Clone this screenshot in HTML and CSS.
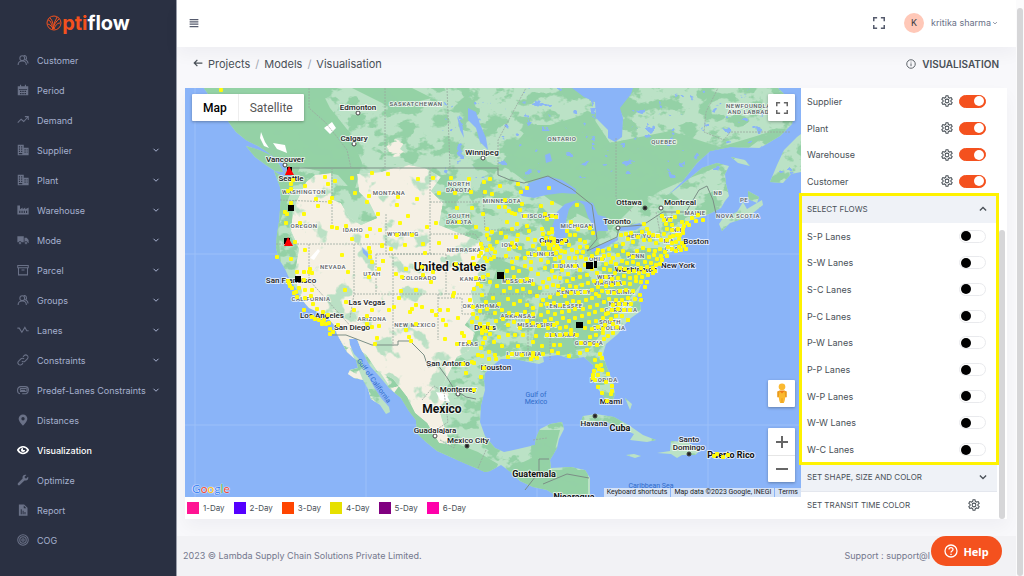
FILE: index.html
```html
<!DOCTYPE html>
<html lang="en">

<head>
    <meta charset="UTF-8">
    <meta name="viewport" content="width=device-width, initial-scale=1.0">
    <title>Optiflow - Visualisation</title>
    <link rel="stylesheet" href="styles.css">
</head>

<body>
    <!-- icon set -->
    <svg class="sprite" aria-hidden="true">
        <symbol id="i-users" viewBox="0 0 16 16"><g class="line"><circle cx="7" cy="5.500" r="3.200"/><path d="M1.500 14.500c0-3 2-5.300 5.500-5.300s5.500 2.300 5.500 5.300M9 2.400c2.600-1.600 5.500 2.800 2.200 5.400 2 .8 3.500 2.700 3.500 5"/></g></symbol>
        <symbol id="i-calendar" viewBox="0 0 16 16"><path fill-rule="evenodd" d="M1 3h3V1h1.500v2h5V1H12v2h3v12H1zM2.500 6.500v1h11v-1zM4 9v1.500h2V9zm3 0v1.500h2V9zm3 0v1.500h2V9zm-6 3v1.500h2V12zm3 0v1.500h2V12zm3 0v1.500h2V12z"/></symbol>
        <symbol id="i-trend" viewBox="0 0 16 16"><path class="line" d="M1 11.500 5.500 7l3.500 3 5.500-6M10.500 3.500H15V8"/></symbol>
        <symbol id="i-building" viewBox="0 0 16 16"><path fill-rule="evenodd" d="M1 1h8v4h6.500v10H1zM2.500 3v1.500H4V3zm3 0v1.500H7V3zm-3 3v1.500H4V6zm3 0v1.500H7V6zm-3 3v1.500H4V9zm3 0v1.500H7V9zm-3 3v1.500H7V12zM10 7v1.500h1.500V7zm3 0v1.500h1V7zm-3 3v1.500h1.500V10zm3 0v1.500h1V10z"/></symbol>
        <symbol id="i-factory" viewBox="0 0 16 16"><path fill-rule="evenodd" d="M.5 2H4v5l3.500-2.500V7L11 4.500V7l4.500-2.500V14H.5zM3 9v3h1.500V9zm3 0v3h1.500V9zm3 0v3h1.500V9zm3 0v3h1.500V9z"/></symbol>
        <symbol id="i-truck" viewBox="0 0 16 16"><path d="M.5 3H9v8H.5zM10 5h3l2.500 3v4H10z"/><g class="wheel"><circle cx="4" cy="12" r="2"/><circle cx="12" cy="12" r="2"/></g></symbol>
        <symbol id="i-box" viewBox="0 0 16 16"><path class="line" d="M1 2h14v3H1zM2 5h12v9.500H2zM6 8h4"/></symbol>
        <symbol id="i-pulse" viewBox="0 0 16 16"><path class="line" d="M.500 5.500H3L6.500 11l4-6.500L13 9h2.500"/></symbol>
        <symbol id="i-link" viewBox="0 0 16 16"><path class="line" d="M6.500 9.500a3 3 0 0 0 4.300 0l3-3A3 3 0 0 0 9.500 2.200L8 3.700M9.500 6.500a3 3 0 0 0-4.300 0l-3 3a3 3 0 0 0 4.300 4.300L8 12.300"/></symbol>
        <symbol id="i-clip" viewBox="0 0 16 16"><path class="line" d="M4 10h7.500a2 2 0 0 0 0-4H5a1.500 1.500 0 0 0 0 2.500h6M4 13c-4.500-1-4.500-9 1-9.500h6c5.500 0 5.500 7.500 1 9.500H7"/></symbol>
        <symbol id="i-pin" viewBox="0 0 16 16"><path fill-rule="evenodd" d="M8 .500a5.800 5.800 0 0 1 5.800 5.800C13.800 10 8 15.500 8 15.500S2.200 10 2.200 6.300A5.800 5.800 0 0 1 8 .500zM8 4a2.200 2.200 0 1 0 0 4.500A2.200 2.200 0 0 0 8 4z"/></symbol>
        <symbol id="i-eye" viewBox="0 0 16 16"><path class="line thick" d="M1 8c3.500-6 10.500-6 14 0-3.500 6-10.500 6-14 0z"/><path d="M8 5.200A2.800 2.800 0 1 0 10.800 8H8z"/></symbol>
        <symbol id="i-wrench" viewBox="0 0 16 16"><path d="M14.800 3.500 12 6.300 9.800 4.100l2.700-2.800C9.500.2 6.500 2.800 7.500 6L1.200 12.300a1.800 1.800 0 0 0 2.500 2.500L10 8.500c3.300 1 6-2 4.800-5z"/></symbol>
        <symbol id="i-report" viewBox="0 0 16 16"><path fill-rule="evenodd" d="M2.500.5h7l4.500 4.500v10.500H2.500zM9 2v3.500h3.500zM5 7v6.500h1.300V7zm2.500 2v4.500h1.300V9zm2.500 1.500v3h1.300v-3z"/></symbol>
        <symbol id="i-target" viewBox="0 0 16 16"><g class="line"><circle cx="8" cy="8" r="7"/><circle cx="8" cy="8" r="4.300"/><circle cx="8" cy="8" r="1.600"/></g></symbol>
        <symbol id="i-down" viewBox="0 0 16 16"><path class="line thick" d="M3 5.500 8 10.500l5-5"/></symbol>
        <symbol id="i-up" viewBox="0 0 16 16"><path class="line thick" d="M3 10.500 8 5.500l5 5"/></symbol>
        <symbol id="i-menu" viewBox="0 0 16 16"><path class="line thick" d="M1 2.500h14M1 6.200h14M1 9.900h14M1 13.600h14"/></symbol>
        <symbol id="i-expand" viewBox="0 0 16 16"><path class="line thick" d="M1 5.500V1h4.500M10.500 1H15v4.500M15 10.500V15h-4.500M5.500 15H1v-4.500"/></symbol>
        <symbol id="i-back" viewBox="0 0 16 16"><path class="line thick" d="M15 8H2M7 3 2 8l5 5"/></symbol>
        <symbol id="i-info" viewBox="0 0 16 16"><g class="line"><circle cx="8" cy="8" r="6.800"/><path d="M8 7v4.500M8 4.300v1.200"/></g></symbol>
        <symbol id="i-gear" viewBox="0 0 16 16"><g class="line"><circle cx="8" cy="8" r="2.500"/><path d="M6.700 1h2.600l.5 2.200 1.600.9 2.200-.7 1.300 2.300L13.200 7.200v1.600l1.700 1.500-1.300 2.300-2.200-.7-1.600.9-.5 2.200H6.700l-.5-2.200-1.600-.9-2.200.7-1.300-2.300 1.700-1.500V7.200L1.100 5.700l1.300-2.300 2.200.7 1.600-.9z"/></g></symbol>
    </svg>

    <aside class="sidebar">
        <a href="#" class="logo">
            <svg class="logo-mark" viewBox="0 0 16 16"><circle cx="8" cy="8" r="7"/><path d="M2 5c3 0 4 6 5 9M4 3c3 2 3 8 4 11M13 4c-3 2-5 6-6 10M14 8c-3 0-5 3-6 6M2 9c3 1 4 3 5 5M11 2c-1 3-3 5-3 8"/></svg><span class="logo-hot">pti</span>flow
        </a>
        <nav class="menu">
            <a href="#"><svg><use href="#i-users"/></svg>Customer</a>
            <a href="#"><svg><use href="#i-calendar"/></svg>Period</a>
            <a href="#"><svg><use href="#i-trend"/></svg>Demand</a>
            <a href="#"><svg><use href="#i-building"/></svg>Supplier<svg class="caret"><use href="#i-down"/></svg></a>
            <a href="#"><svg><use href="#i-building"/></svg>Plant<svg class="caret"><use href="#i-down"/></svg></a>
            <a href="#"><svg><use href="#i-factory"/></svg>Warehouse<svg class="caret"><use href="#i-down"/></svg></a>
            <a href="#"><svg><use href="#i-truck"/></svg>Mode<svg class="caret"><use href="#i-down"/></svg></a>
            <a href="#"><svg><use href="#i-box"/></svg>Parcel<svg class="caret"><use href="#i-down"/></svg></a>
            <a href="#"><svg><use href="#i-users"/></svg>Groups<svg class="caret"><use href="#i-down"/></svg></a>
            <a href="#"><svg><use href="#i-pulse"/></svg>Lanes<svg class="caret"><use href="#i-down"/></svg></a>
            <a href="#"><svg><use href="#i-link"/></svg>Constraints<svg class="caret"><use href="#i-down"/></svg></a>
            <a href="#"><svg><use href="#i-clip"/></svg>Predef-Lanes Constraints<svg class="caret"><use href="#i-down"/></svg></a>
            <a href="#"><svg><use href="#i-pin"/></svg>Distances</a>
            <a href="#" class="active"><svg><use href="#i-eye"/></svg>Visualization</a>
            <a href="#"><svg><use href="#i-wrench"/></svg>Optimize</a>
            <a href="#"><svg><use href="#i-report"/></svg>Report</a>
            <a href="#"><svg><use href="#i-target"/></svg>COG</a>
        </nav>
    </aside>

    <div class="page">
        <header class="topbar">
            <button type="button" class="icon-btn" aria-label="Toggle menu"><svg class="ico-10"><use href="#i-menu"/></svg></button>
            <div class="topbar-right">
                <button type="button" class="icon-btn" aria-label="Fullscreen"><svg class="ico-12"><use href="#i-expand"/></svg></button>
                <button type="button" class="user"><span class="avatar">K</span>kritika sharma<svg class="user-caret"><use href="#i-down"/></svg></button>
            </div>
        </header>

        <main class="content">
            <div class="title-row">
                <nav class="crumbs">
                    <a href="#" aria-label="Back"><svg class="ico-10"><use href="#i-back"/></svg></a>
                    <a href="#">Projects</a><span class="sep">/</span><a href="#">Models</a><span class="sep">/</span><span>Visualisation</span>
                </nav>
                <h1><svg class="ico-10"><use href="#i-info"/></svg>VISUALISATION</h1>
            </div>

            <div class="card">
                <div class="map-side">
                    <div class="map">
                        <svg class="map-art" viewBox="185 88 616 409" preserveAspectRatio="xMidYMid slice" role="img" aria-label="Map of North America">
                            <defs>
                                <path id="land" d="M204 88l4 6 5 7 7 7 4 7 6 9 6 8 10 8 12 6 8 5 8 6 8 5 4 6-1 9-5-2-6-4 3 8 3 8 1 13-1 10-1 12-2 12-1 14 3 11 6 10 4 9 7 11 6 11 7 8 11 5 8 5 6 7 3 9 5 9 5 9 9 8 2 8-8 2-2 4 6 4 9 2 5 9 3 10 9 6 6 9 4-2-1-5-8-9-6-9-8-15-6-13-7-7-4-9-1-6 8 0 4 10 9 17 9 10 11 13 11 9 8 13 7 9 1 13 9 9 11 9 18 8 16 7 14 6 5-1 11-6 11 8 8 8 13 6 14 3 8 5h35l0-17-5-8-14-3-20 1-1-8 7-12 2-9 5-10-2-7-12 2-10 5-4 9-1 7-17 4-14 3-9-4-10-12-5-14 1-17 4-15-1-9 1-8 6-6 10-8 14 0 13 3 11 2 5-2-1-5 15-2 13 4 13-2 9 8 0 12 5 12 6 8 9 3 2-6-2-12-7-17-3-11 3-10 12-10 8-11 5-5 10-7-1-8-3-6 4-12 6-10 5-5 14-16 18-6-2-9-4-6 5-7 8-6 13-4 7-3 10-5 4-7 4-5-3-12-1-10 4-8-12-3-15 5-12 10-23 18 15-14 15-19 13-12 20-4 30 1 20-12 12-12 3-14-9-14-11-11z"/>
                                <path id="islands" d="M246 146l13 4 11 5 9 9 4 8-8-1-9-6-11-8zM719 224l4-6 14-6 6-10 4 7 15-9 1 5-15 12-18 6-8 8zM748 191l11 6-2 6-9-4zM731 157l14 3 5 6-12-3zM797 137l-13 13-7 15-7 17 13 1 8-9 10-2V134zM580 424l3-8 13-2 18 3 16 9 13 9 13 5-9 2-17-2 4-6-16-7-14-6-13 1zM657 453l13-2 1-10 16 1 14 8-6 5-13 0-5 3-6-4zM626 455l8-1 7 2-6 2zM712 454h17l-2 4h-13zM625 398l5 12 2-6z"/>
                                <clipPath id="landClip"><use href="#land"/><use href="#islands"/></clipPath>
                                <filter id="patches" x="0" y="0" width="100%" height="100%" color-interpolation-filters="sRGB">
                                    <feTurbulence type="fractalNoise" baseFrequency=".05 .07" numOctaves="4" seed="8"/>
                                    <feColorMatrix values="0 0 0 0 .58  0 0 0 0 .82  0 0 0 0 .65  12 0 0 0 -6"/>
                                </filter>
                                <filter id="scrub" x="0" y="0" width="100%" height="100%" color-interpolation-filters="sRGB">
                                    <feTurbulence type="fractalNoise" baseFrequency=".04 .04" numOctaves="4" seed="21"/>
                                    <feColorMatrix values="0 0 0 0 .73  0 0 0 0 .88  0 0 0 0 .77  14 0 0 0 -8"/>
                                </filter>
                                <filter id="ponds" x="0" y="0" width="100%" height="100%" color-interpolation-filters="sRGB">
                                    <feTurbulence type="fractalNoise" baseFrequency=".09 .12" numOctaves="3" seed="4"/>
                                    <feColorMatrix values="0 0 0 0 .54  0 0 0 0 .71  0 0 0 0 .97  20 0 0 0 -14"/>
                                </filter>
                                <clipPath id="dryClip"><path id="dry" d="M306 182l9-7 16-2 0 26 10 4 8 14 12 8 16-7-8-16-10-10-2-18 24-2L393 168 409 165 425 168 441 177l-10 14 12 12-4 22 20 8 20 8 6 12-10 12 12 8-16 18 4 20-10 14 10 8-6 18-12 6-8 16-6 12 6 10-10 14 6 20 6 16-12-2-12-20-12-10-8-16-14-18-16-8-12-18-30-10-14-12-14-22-10-22-2-16 4-22-8-18 2-22z"/></clipPath>
                                <marker id="customer" viewBox="0 0 4 4" refX="2" refY="2" markerWidth="4" markerHeight="4" markerUnits="userSpaceOnUse"><rect width="4" height="4" rx="1" fill="#fffb0a"/></marker>
                            </defs>

                            <rect class="sea" x="0" y="0" width="1100" height="700"/>
                            <path class="graticule" d="M195 88v409M366 88v409M537 88v409M708 88v409M185 254h616M185 425h616"/>
                            <use href="#land" class="ground"/>
                            <use href="#islands" class="ground"/>
                            <g clip-path="url(#landClip)">
                                <path class="forest" d="M200 88h120l10 20 20 25 12 30-8 30-16-18-38-8-22 60 4 50 10 30-14-10-10-90 4-30-60-44zM352 88l60 0 20 10-40 10zM500 165l30-40 20 0 40-12 20 30 60-12 50 16 50-15-40 30-50 20-40 18-30 30-60-30-40-30zM540 205l20 20-12 10-12-20zM500 260l30 10-10 40-22 20-12-30zM540 300l60-22 40-30 30 0-40 50-40 50-60 8zM388 370l20 20 12 22 12 22 46 18 20 12-4 12-40-8-36-18-16-24zM530 430h30l-10 40 38 0 0 30h-40l-50-26 34-16z"/>
                                <path class="dry" d="M330 325l44 18 20 0 14 30-14 20-24-36-22-14 16 40 12 20-16-10-20-30-8-18zM386 142l10-3 8 4-4 6 8 6-14 2-6-6z"/>
                                <rect x="185" y="88" width="616" height="409" filter="url(#patches)"/>
                                <g clip-path="url(#dryClip)"><use href="#dry" class="dry"/><rect x="185" y="88" width="616" height="409" filter="url(#scrub)"/></g>
                                <rect x="440" y="88" width="360" height="90" filter="url(#ponds)"/>
                                <path class="snow" d="M261 132l4 10 4 6-5-2-4-8zM273 143l12 2 2 8-10-4zM324 128l8-6 4 6-6 6zM436 392l10 2 4 8-10-2zM310 258l8-9 2 2-6 9z"/>
                            </g>
                            <path class="sea" d="M572 88l12 9 11 5 1 16 4 4 8 8 0 8 7 4 7-5 1-19-3-10 11-14 2-6zM520 194l9-11 18-7 15 4 14 9 0 5-14-1-16 2-12 3-12-2zM557 212l8-8 12-4-8 9-3 12 1 12-4 13-7 0-2-12 3-10-2 8-4-2zM577 200l16 3 5 12 8 2 2 14-10 0-4 6 0-10-6-10-4-12zM590 249l14-6 14-6 0 3-14 8-12 4zM618 228l22-5 2 3-6 4-16 1zM468 108l8 4 4 12 6 14 2 12-8-8-4-14-8-8zM457 116l5 8 2 14-4-8zM545 155l5-2 2 8-6 2zM362 247l6 6 0 5-5-5zM284 166l6 6 0 9-3-6z"/>
                            <path class="border" d="M289 168h209v7l12 5 14 3 24-7 24 13 20 16 5 34-10 12 30-14 2-10 24-2 20-13h23l13-22 8-4 6 14 4 18M330 335l16 0 26 10h26v-4h12l14 14 4 12 10-2 10 14 6 10 12 8 10 2M525 490l14-18v-13h10M543 484l24-10 22 4"/>
                            <path class="state" d="M309 88v20l16 14 16 20 6 8 4 18M385 88v80M447 88l3 80M498 168v-28l28-52M332 168v60M280 200l52 2M276 244h110M309 244v36l45 50M354 244v50l-4 24M376 254v40M386 214v40h50M376 254h70M430 168v86M430 202h50M430 234h45l18 24M446 254v40h50M393 254v40M354 294h92M393 294v52M438 294v46M438 298h24v16h34M616 138v60l16 14M488 230h36M483 190l2 40M493 258l34 0M500 294h60l60-4M500 320h40M528 300v60M550 320v40M568 318l8 30M560 260v30M576 250v30M620 252h44M600 300h44M656 212l6 30M672 212l-2 26M790 132h-60l-6 8-20-8 2-20 12-24M422 400l12-14 10 6 4 30-12 8M440 440l14 8 4-14M486 450l-8 18M533 440l14-2"/>

                            <g class="town"><circle cx="358" cy="113" r="2"/><circle cx="354" cy="144" r="2"/><circle cx="483" cy="158" r="2"/><circle cx="285" cy="165" r="2"/><circle cx="661" cy="208" r="2"/><circle cx="618" cy="228" r="2"/><circle cx="458" cy="394" r="2"/><circle cx="435" cy="436" r="2"/></g>
                            <g class="town capital"><circle cx="645" cy="208" r="2"/><circle cx="467" cy="446" r="2"/><circle cx="595" cy="416" r="2"/><circle cx="689" cy="454" r="2"/></g>

                            <g class="place">
                                <text x="358" y="110">Edmonton</text><text x="354" y="141">Calgary</text><text x="482" y="155">Winnipeg</text>
                                <text x="285" y="162">Vancouver</text><text x="291" y="181">Seattle</text><text x="629" y="205">Ottawa</text>
                                <text x="680" y="205">Montreal</text><text x="617" y="224">Toronto</text><text x="696" y="244">Boston</text>
                                <text x="678" y="268">New York</text><text x="636" y="272">Washington</text><text x="554" y="243">Chicago</text>
                                <text x="291" y="283">San Francisco</text><text x="367" y="305">Las Vegas</text><text x="322" y="318">Los Angeles</text>
                                <text x="352" y="330">San Diego</text><text x="485" y="330">Dallas</text><text x="448" y="366">San Antonio</text>
                                <text x="496" y="370">Houston</text><text x="458" y="392">Monterrey</text><text x="435" y="433">Guadalajara</text>
                                <text x="468" y="443">Mexico City</text><text x="611" y="404">Miami</text><text x="594" y="426">Havana</text>
                                <text x="689" y="442">Santo</text><text x="689" y="450">Domingo</text>
                            </g>
                            <g class="region">
                                <text x="416" y="106">SASKATCHEWAN</text><text x="562" y="141">ONTARIO</text><text x="664" y="144">QUEBEC</text>
                                <text x="753" y="108">NEWFOUNDLAND</text><text x="753" y="114">AND LABRADOR</text><text x="304" y="194">WASHINGTON</text>
                                <text x="389" y="195">MONTANA</text><text x="459" y="186">NORTH</text><text x="459" y="192">DAKOTA</text>
                                <text x="502" y="203">MINNESOTA</text><text x="459" y="218">SOUTH</text><text x="459" y="224">DAKOTA</text>
                                <text x="540" y="218">WISCONSIN</text><text x="577" y="228">MICHIGAN</text><text x="304" y="228">OREGON</text>
                                <text x="353" y="232">IDAHO</text><text x="403" y="236">WYOMING</text><text x="464" y="252">NEBRASKA</text>
                                <text x="510" y="247">IOWA</text><text x="541" y="256">ILLINOIS</text><text x="566" y="268">INDIANA</text>
                                <text x="597" y="261">OHIO</text><text x="333" y="269">NEVADA</text><text x="372" y="276">UTAH</text>
                                <text x="419" y="280">COLORADO</text><text x="473" y="281">KANSAS</text><text x="518" y="283">MISSOURI</text>
                                <text x="311" y="301">CALIFORNIA</text><text x="372" y="321">ARIZONA</text><text x="415" y="327">NEW MEXICO</text>
                                <text x="481" y="308">OKLAHOMA</text><text x="518" y="318">ARKANSAS</text><text x="574" y="294">KENTUCKY</text>
                                <text x="564" y="308">TENNESSEE</text><text x="537" y="327">MISSISSIPPI</text><text x="561" y="337">ALABAMA</text>
                                <text x="589" y="345">GEORGIA</text><text x="468" y="346">TEXAS</text><text x="524" y="356">LOUISIANA</text>
                                <text x="604" y="382">FLORIDA</text><text x="610" y="324">SOUTH</text><text x="609" y="330">CAROLINA</text>
                                <text x="620" y="306">NORTH</text><text x="621" y="312">CAROLINA</text><text x="620" y="294">VIRGINIA</text>
                                <text x="606" y="279">WEST</text><text x="608" y="285">VIRGINIA</text><text x="636" y="258">PENN</text>
                                <text x="643" y="238">NEW YORK</text><text x="695" y="215">MAINE</text><text x="669" y="221">VT</text>
                                <text x="677" y="232">NH</text><text x="669" y="243">MA</text><text x="673" y="251">CT RI</text>
                                <text x="718" y="195">NB</text><text x="744" y="202">PE</text><text x="738" y="218">NOVA SCOTIA</text>
                            </g>
                            <g class="country">
                                <text x="450" y="271" class="big">United States</text><text x="442" y="413" class="big">Mexico</text>
                                <text x="534" y="477">Guatemala</text><text x="574" y="500">Nicaragua</text>
                                <text x="620" y="431">Cuba</text><text x="731" y="458">Puerto Rico</text>
                            </g>
                            <g class="water-name">
                                <text x="536" y="397">Gulf of</text><text x="536" y="404">Mexico</text><text x="651" y="488">Caribbean Sea</text>
                                <text transform="translate(372 382) rotate(54)">Gulf of California</text>
                            </g>

                            <!-- customers: west, plains -->
                            <polyline class="dots" points="221,90 325,177 328,184 335,181 352,178 355,193 372,173 388,174 369,196 367,202 398,197 397,205 293,180 291,184 291,189 288,191 305,186 316,199 318,206 332,198 330,202 291,203 285,212 287,214 304,214 286,223 300,223 378,214 332,227 337,228 346,226 370,229 380,230 367,236 352,239 382,245 391,249 369,248 370,252 370,257 372,262 383,261 379,269 369,277 396,274 342,255 348,272 295,242 305,250 277,257 291,259 310,269 304,272 309,272 312,273 297,272 288,281 304,280 290,286 292,288 289,283 299,288 305,290 312,290 294,293 296,292 297,297 305,298 311,296 313,304 317,309 304,310 323,312 312,317 315,319 319,320 322,322 324,320 326,324 329,323 322,324 328,315 330,329 333,332 330,334 338,325 345,290 346,302 354,310 372,310 367,316 389,310 367,324 372,327 379,326 394,307 399,298"/>
                            <polyline class="dots" points="418,179 433,178 451,178 469,179 439,193 455,193 471,192 417,199 408,216 400,223 457,208 472,208 427,227 436,223 459,222 476,227 397,235 412,235 439,243 456,237 423,244 405,245 382,246 425,253 383,261 422,267 406,269 433,272 456,264 402,277 423,275 431,282 416,290 401,291 454,293 453,296 416,305 422,307 412,309 410,312 432,311 436,315 440,310 448,310 458,318 443,320 416,324 406,330 446,325 462,333 377,338 375,344 409,337 411,341 445,339 457,344 469,342 464,336 466,373 472,362 474,363 463,364 481,377 474,390 484,368 478,355 482,356 481,348 483,343 485,338 482,333 494,342 489,352 495,355 496,359 489,359"/>
                            <!-- customers: midwest -->
                            <polyline class="dots" points="490,179 484,182 485,192 492,194 500,186 518,184 521,192 527,188 549,188 505,200 499,207 505,207 509,211 512,213 515,214 483,214 522,204 520,210 507,222 517,224 525,216 541,206 552,203 545,214 547,219 552,216 556,217 577,205 571,222 527,226 529,231 542,229 552,229 512,229 501,233 487,229 492,232 487,235 489,239 506,237 518,235 517,240 528,239 512,243 497,242 487,250 490,246 481,244 482,248 479,256 481,253 485,258 487,261 491,259 473,258 474,264 492,249 495,252 494,257 506,256 509,249 514,247 520,248 512,262 517,258 525,258 528,253 533,246 535,240 539,249 543,244 548,244 551,238 552,232 554,239 551,245 554,249 558,248 556,253 562,243 565,240 570,235 567,231 575,235 580,240 578,229 585,242 593,233 590,228 587,247 580,247 569,245 572,250 565,252 577,252 583,252 549,248 546,238 543,234 549,233 554,243 557,246 561,251 547,254 541,260 535,255 531,262 548,262 555,259 560,257 563,262 569,258 575,258 581,257 586,259 592,256 597,253"/>
                            <polyline class="dots" points="545,268 552,271 556,266 562,270 568,274 575,266 580,270 585,265 592,269 597,273 587,275 580,277 573,279 567,281 560,278 555,277 549,279 543,282 538,274 531,269 525,266 519,271 513,268 507,271 503,277 508,282 514,277 521,281 527,279 533,284 540,288 547,287 553,285 558,286 563,289 570,286 576,287 582,285 588,283 594,281 598,287 592,290 585,292 578,293 571,293 565,296 558,294 550,297 543,300 537,296 530,292 523,289 517,291 510,288 504,291 497,286 490,282 483,277 488,275 476,278 478,284 481,286 474,289 482,295 486,302 493,298 499,304 508,299 514,304 520,301 527,305 533,308 541,305 547,304 554,303 560,305 567,303 573,301 579,302 586,300 592,298 599,296 604,302 597,305 590,307 583,309 575,309 569,311 562,312 555,314 548,312 541,315 533,314 525,312 517,314 509,313 502,310 495,313 487,309 480,311 473,307 470,300"/>
                            <polyline class="dots" points="473,314 477,318 472,322 480,324 484,327 488,324 491,328 486,331 490,334 482,330 496,321 503,319 508,325 514,322 520,328 527,321 533,323 539,326 545,321 551,319 557,323 563,318 569,321 575,318 582,316 589,314 595,312 602,310 608,313 603,318 596,321 589,322 585,328 592,329 598,327 605,325 560,328 554,325 566,327 571,330 548,328 502,346 499,337 508,335 515,335 523,335 518,346 533,342 542,346 536,336 554,345 560,345 547,335 553,335 560,335 566,334 571,334 577,335 581,343 587,350 580,353 569,356 558,353 552,351 533,353 531,359 537,358 543,354 522,355 512,354 508,357 533,356 590,337 596,335 603,333 590,344 597,345 604,339 608,336 613,333 628,320"/>
                            <polyline class="dots" points="600,354 602,358 595,360 597,366 601,365 599,369 602,370 594,371 608,374 593,375 593,378 598,375 595,380 598,387 602,393 612,386 612,391 611,394 607,401 606,382 714,456 717,454 723,457 728,455"/>
                            <!-- customers: east coast -->
                            <polyline class="dots" points="678,212 698,215 703,220 692,218 696,221 687,223 684,226 682,222 675,217 662,216 664,220 670,220 666,224 672,225 672,230 667,229 683,229 683,233 677,235 673,236 670,237 689,225 644,224 647,229 649,233 642,232 653,235 658,236 664,234 679,239 682,243 684,246 686,249 679,247 681,250 676,251 672,249 668,247 672,243 676,242 680,235 678,229 667,240 661,240 656,243 650,240 644,240 638,237 631,233 626,234 621,235 628,239 633,242 623,244 616,246 609,249 603,251 598,250 604,256 609,255 613,258 618,255 623,251 628,254 633,257 637,251 643,248 649,250 655,251 660,249 665,252 661,256 657,259 662,260 667,256 654,255 649,257 645,262 651,263 656,265 660,264 653,268 647,267 641,268 638,264 633,262 627,263 622,261 616,264 611,262 606,264 602,259 604,269 610,270 615,273 620,268 625,269 629,272 634,271 639,273 644,272 648,275 653,273 655,271 642,277 636,277 630,278 624,276 618,278 612,279 606,277 601,281 606,286 612,285 618,284 624,283 630,284 636,281 641,282 647,282 645,287 640,295 633,291 626,290 620,291 614,293 608,292 602,291 596,294 641,300 635,299 628,298 622,300 616,300 609,299 613,305 619,304 625,304 631,304 630,310 624,310 618,309 612,310 616,316 622,316 628,320 611,319 606,314 613,324 603,329 617,327"/>

                            <!-- warehouses and plants -->
                            <path class="warehouse" d="M288 205h6v6h-6zM284 238h6v6h-6zM295 276h6v6h-6zM497 272h7v7h-7zM586 262h7v7h-7zM594 261h3v7h-3zM576 322h7v6h-7zM287 167h5v5h-5z"/>
                            <path class="plant" d="M289 166l5 9h-9zM288 237l5 9h-9z"/>
                        </svg>

                        <div class="map-type">
                            <button type="button" class="on">Map</button>
                            <button type="button">Satellite</button>
                        </div>
                        <button type="button" class="map-btn map-full" aria-label="Toggle fullscreen view"><svg class="ico-12"><use href="#i-expand"/></svg></button>
                        <div class="map-tools">
                            <button type="button" class="map-btn" aria-label="Street View Pegman">
                                <svg class="pegman" viewBox="0 0 12 22"><path fill="#e99a1c" d="M3 8h6l2 1v6H9l-1 6H4l-1-6H1V9z"/><path fill="#fbb930" d="M3.500 8h5l1 7-1.500 6H6.500V16h-1v5H4L2.500 15z"/><circle cx="6" cy="4" r="3.500" fill="#fbb930"/><path fill="#ee7b1b" d="M3 8h6l-3 3z"/></svg>
                            </button>
                            <div class="zoom">
                                <button type="button" aria-label="Zoom in"><svg viewBox="0 0 12 12"><path d="M6 0v12M0 6h12"/></svg></button>
                                <button type="button" aria-label="Zoom out"><svg viewBox="0 0 12 12"><path d="M0 6h12"/></svg></button>
                            </div>
                        </div>
                        <div class="google"><span class="g-blue">G</span><span class="g-red">o</span><span class="g-yellow">o</span><span class="g-blue">g</span><span class="g-green">l</span><span class="g-red">e</span></div>
                        <div class="map-credit">
                            <button type="button">Keyboard shortcuts</button><span>Map data ©2023 Google, INEGI</span><a href="#">Terms</a>
                        </div>
                    </div>
                    <ul class="legend">
                        <li><i class="d1"></i>1-Day</li>
                        <li><i class="d2"></i>2-Day</li>
                        <li><i class="d3"></i>3-Day</li>
                        <li><i class="d4"></i>4-Day</li>
                        <li><i class="d5"></i>5-Day</li>
                        <li><i class="d6"></i>6-Day</li>
                    </ul>
                </div>

                <div class="panel">
                    <div class="row"><label for="supplier">Supplier</label><button type="button" class="gear" aria-label="Supplier settings"><svg><use href="#i-gear"/></svg></button><input type="checkbox" class="switch" id="supplier" checked></div>
                    <div class="row"><label for="plant">Plant</label><button type="button" class="gear" aria-label="Plant settings"><svg><use href="#i-gear"/></svg></button><input type="checkbox" class="switch" id="plant" checked></div>
                    <div class="row"><label for="warehouse">Warehouse</label><button type="button" class="gear" aria-label="Warehouse settings"><svg><use href="#i-gear"/></svg></button><input type="checkbox" class="switch" id="warehouse" checked></div>
                    <div class="row"><label for="cust">Customer</label><button type="button" class="gear" aria-label="Customer settings"><svg><use href="#i-gear"/></svg></button><input type="checkbox" class="switch" id="cust" checked></div>
                    <section class="flows">
                        <button type="button" class="group-head">SELECT FLOWS<svg><use href="#i-up"/></svg></button>
                        <div class="row"><label for="sp">S-P Lanes</label><input type="checkbox" class="switch" id="sp"></div>
                        <div class="row"><label for="sw">S-W Lanes</label><input type="checkbox" class="switch" id="sw"></div>
                        <div class="row"><label for="sc">S-C Lanes</label><input type="checkbox" class="switch" id="sc"></div>
                        <div class="row"><label for="pc">P-C Lanes</label><input type="checkbox" class="switch" id="pc"></div>
                        <div class="row"><label for="pw">P-W Lanes</label><input type="checkbox" class="switch" id="pw"></div>
                        <div class="row"><label for="pp">P-P Lanes</label><input type="checkbox" class="switch" id="pp"></div>
                        <div class="row"><label for="wp">W-P Lanes</label><input type="checkbox" class="switch" id="wp"></div>
                        <div class="row"><label for="ww">W-W Lanes</label><input type="checkbox" class="switch" id="ww"></div>
                        <div class="row"><label for="wc">W-C Lanes</label><input type="checkbox" class="switch" id="wc"></div>
                    </section>
                    <button type="button" class="group-head">SET SHAPE, SIZE AND COLOR<svg><use href="#i-down"/></svg></button>
                    <button type="button" class="group-head plain">SET TRANSIT TIME COLOR<svg class="gear-end"><use href="#i-gear"/></svg></button>
                </div>
                <div class="panel-scroll"><span></span></div>
            </div>
        </main>

        <footer class="footer">
            <span>2023 © Lambda Supply Chain Solutions Private Limited.</span>
            <span>Support : support@l</span>
        </footer>
    </div>

    <div class="page-scroll"><span></span></div>

    <button type="button" class="help"><svg viewBox="0 0 14 14"><circle cx="7" cy="7" r="6"/><path d="M5 5.600c0-2.700 4-2.600 4 0C9 7 7 7 7 8.500M7 9.800v1.200"/></svg>Help</button>
</body>

</html>
```

FILE: styles.css
```css
* {
    margin: 0;
    padding: 0;
    box-sizing: border-box;
}

body {
    font-family: Inter, 'Open Sans', sans-serif;
    font-size: 9px;
    color: #495057;
    background: #f8f8fb;
    height: 100vh;
    display: flex;
    overflow: hidden;
}

a {
    color: inherit;
    text-decoration: none;
}

button {
    font: inherit;
    color: inherit;
    background: none;
    border: none;
    cursor: pointer;
}

svg {
    fill: currentColor;
    flex: none;
}

.sprite {
    position: absolute;
    width: 0;
    height: 0;
}

.line {
    fill: none;
    stroke: currentColor;
    stroke-width: 1.4;
}

.thick {
    stroke-width: 2;
}

.wheel {
    stroke: #2a3042;
    stroke-width: 1;
}

.ico-10 {
    width: 10px;
    height: 10px;
}

.ico-12 {
    width: 12px;
    height: 12px;
}

/* sidebar */
.sidebar {
    width: 177px;
    flex: none;
    background: #2a3042;
    border-right: 1px solid #9a9eaa;
}

.logo {
    height: 45px;
    display: flex;
    align-items: center;
    justify-content: center;
    color: #fff;
    font-size: 20px;
    font-weight: 700;
}

.logo-hot {
    color: #f4511e;
}

.logo-mark {
    width: 16px;
    height: 16px;
    fill: none;
    stroke: #f4511e;
    stroke-width: 1;
}

.menu a {
    height: 30px;
    display: flex;
    align-items: center;
    padding: 0 16px 0 17px;
    color: #a6b0cf;
    white-space: nowrap;
}

.menu svg {
    width: 12px;
    height: 12px;
    margin-right: 8px;
    color: #6a7187;
}

.menu .caret {
    width: 8px;
    height: 8px;
    margin: 0 0 0 auto;
    color: #a6b0cf;
}

.menu .active,
.menu .active svg {
    color: #fff;
}

.menu .active {
    font-weight: 500;
}

/* page */
.page {
    flex: 1;
    min-width: 0;
    display: flex;
    flex-direction: column;
}

.topbar {
    height: 47px;
    flex: none;
    background: #fff;
    box-shadow: 0 8px 16px rgba(18, 38, 63, 0.04);
    display: flex;
    align-items: center;
    justify-content: space-between;
    padding: 0 18px 2px 12px;
    color: #555b6d;
}

.topbar-right {
    display: flex;
    align-items: center;
    gap: 19px;
}

.icon-btn {
    display: flex;
}

.user {
    display: flex;
    align-items: center;
    color: #6a7187;
}

.avatar {
    width: 20px;
    height: 20px;
    border-radius: 50%;
    background: #ffc8b8;
    color: #343a40;
    display: flex;
    align-items: center;
    justify-content: center;
    margin-right: 7px;
}

.user-caret {
    width: 6px;
    height: 6px;
    margin-left: 1px;
}

.content {
    flex: 1;
    min-height: 0;
    display: flex;
    flex-direction: column;
    padding: 0 9px 17px 8px;
}

.title-row {
    height: 41px;
    flex: none;
    display: flex;
    align-items: center;
    justify-content: space-between;
    padding: 0 8px 8px;
}

.crumbs {
    display: flex;
    align-items: center;
    gap: 5px;
    font-size: 11px;
}

.sep {
    color: #a0a5b0;
}

h1 {
    display: flex;
    align-items: center;
    gap: 6px;
    font-size: 10px;
    font-weight: 600;
}

.card {
    flex: 1;
    min-height: 0;
    display: flex;
    background: #fff;
    box-shadow: 0 8px 16px rgba(18, 38, 63, 0.04);
}

.map-side {
    flex: 1;
    min-width: 0;
    display: flex;
    flex-direction: column;
}

/* map */
.map {
    flex: 1;
    min-height: 0;
    position: relative;
    overflow: hidden;
    font-family: Roboto, sans-serif;
}

.map-art {
    display: block;
    width: 100%;
    height: 100%;
}

.sea {
    fill: #8ab4f8;
}

.graticule {
    fill: none;
    stroke: #9cc0f9;
}

.ground {
    fill: #bbe2c6;
}

.forest {
    fill: #94d2a5;
}

.dry {
    fill: #f5f0e4;
}

.snow {
    fill: #fff;
}

.border {
    fill: none;
    stroke: #7c8f86;
}

.state {
    fill: none;
    stroke: #9aa8a0;
    stroke-width: 0.8;
    stroke-dasharray: 2 1;
}

.town circle {
    fill: #fff;
    stroke: #444;
}

.capital circle {
    fill: #222;
}

.map-art text {
    text-anchor: middle;
    paint-order: stroke;
    stroke: #fff;
    stroke-opacity: 0.7;
    stroke-width: 2px;
    stroke-linejoin: round;
}

.place {
    font-size: 8px;
    font-weight: 500;
    fill: #202124;
}

.region {
    font-size: 6px;
    font-weight: 500;
    letter-spacing: 0.5px;
    fill: #5a6066;
}

.country {
    font-size: 9px;
    font-weight: 700;
    fill: #111;
}

.country .big {
    font-size: 12px;
}

.map-art .water-name text {
    font-size: 7px;
    fill: #2f6bc9;
    stroke: none;
}

.dots {
    fill: none;
    stroke: none;
    marker: url(#customer);
}

.warehouse {
    fill: #000;
}

.plant {
    fill: #f00;
}

.map-type {
    position: absolute;
    left: 7px;
    top: 6px;
    height: 27px;
    display: flex;
    background: #fff;
    border-radius: 1px;
    box-shadow: 0 1px 3px rgba(0, 0, 0, 0.3);
    font-size: 12px;
    color: #565656;
}

.map-type button {
    padding: 0 11px;
}

.map-type .on {
    color: #000;
    font-weight: 500;
    border-right: 1px solid #eee;
}

.map-btn {
    width: 27px;
    height: 27px;
    display: flex;
    align-items: center;
    justify-content: center;
    background: #fff;
    border-radius: 1px;
    box-shadow: 0 1px 3px rgba(0, 0, 0, 0.3);
    color: #666;
}

.map-full {
    position: absolute;
    right: 6px;
    top: 6px;
}

.map-tools {
    position: absolute;
    right: 6px;
    bottom: 15px;
    display: flex;
    flex-direction: column;
    gap: 21px;
}

.pegman {
    width: 12px;
    height: 21px;
}

.zoom {
    display: flex;
    flex-direction: column;
    background: #fff;
    border-radius: 1px;
    box-shadow: 0 1px 3px rgba(0, 0, 0, 0.3);
}

.zoom button {
    width: 27px;
    height: 27px;
    display: flex;
    align-items: center;
    justify-content: center;
}

.zoom svg {
    width: 12px;
    height: 12px;
    stroke: #666;
    stroke-width: 2;
}

.zoom button + button {
    border-top: 1px solid #e6e6e6;
}

.google {
    position: absolute;
    left: 7px;
    bottom: 1px;
    font-family: Lato, sans-serif;
    font-size: 12px;
    text-shadow: 0 0 1px #fff, 0 0 1px #fff, 0 0 1px #fff;
}

.g-blue {
    color: #4285f4;
}

.g-red {
    color: #ea4335;
}

.g-yellow {
    color: #fbbc05;
}

.g-green {
    color: #34a853;
}

.map-credit {
    position: absolute;
    right: 0;
    bottom: 0;
    display: flex;
    gap: 1px;
    font-size: 7px;
    line-height: 9px;
    color: #222;
}

.map-credit > * {
    padding: 0 3px;
    background: rgba(245, 245, 245, 0.7);
}

.legend {
    height: 22px;
    flex: none;
    display: flex;
    align-items: center;
    gap: 9px;
    padding: 0 2px;
    list-style: none;
    font-size: 8px;
}

.legend li {
    display: flex;
    align-items: center;
    gap: 4px;
}

.legend i {
    width: 12px;
    height: 12px;
}

.d1 { background: #ff1493; }
.d2 { background: #5500ff; }
.d3 { background: #ff4500; }
.d4 { background: #e6e000; }
.d5 { background: #800080; }
.d6 { background: #ff00aa; }

/* settings panel */
.panel {
    width: 196px;
    flex: none;
    display: flex;
    flex-direction: column;
}

.row {
    flex: 1;
    min-height: 0;
    display: flex;
    align-items: center;
    padding: 0 11px 0 6px;
}

.row label {
    flex: 1;
}

.gear {
    display: flex;
    margin-right: 6px;
}

.gear svg,
.gear-end {
    width: 12px;
    height: 12px;
}

.switch {
    appearance: none;
    width: 27px;
    height: 13px;
    border: 1px solid #e9eaed;
    border-radius: 7px;
    background: #fff;
    display: flex;
    align-items: center;
    padding: 0 1px;
}

.switch::before {
    content: '';
    width: 10px;
    height: 10px;
    border-radius: 50%;
    background: #000;
}

.switch:checked {
    background: #f4511e;
    border-color: #f4511e;
    justify-content: flex-end;
}

.switch:checked::before {
    background: #fff;
}

.flows {
    flex: 9 1 28px;
    min-height: 0;
    display: flex;
    flex-direction: column;
    outline: 3px solid #fff200;
    outline-offset: -1px;
    z-index: 1;
}

.group-head {
    height: 28px;
    flex: none;
    display: flex;
    align-items: center;
    justify-content: space-between;
    padding: 0 9px 0 6px;
    background: #eff2f7;
    font-size: 8px;
}

.group-head svg {
    width: 10px;
    height: 10px;
}

.plain {
    background: #fff;
    border-top: 1px solid #e4e7ee;
    padding-right: 17px;
}

.group-head .gear-end {
    width: 12px;
    height: 12px;
}

.panel-scroll {
    width: 10px;
    display: flex;
    align-items: flex-end;
    justify-content: center;
}

.panel-scroll span {
    width: 6px;
    height: 67%;
    border-radius: 3px;
    background: #d6d6d8;
}

.page-scroll {
    width: 8px;
    padding: 8px 1px 0;
    display: flex;
    background: #fbfbfc;
}

.page-scroll span {
    flex: 1;
    border-radius: 3px;
    background: #d6d6d8;
}

/* right padding keeps the text clear of the help button */
.footer {
    height: 40px;
    flex: none;
    display: flex;
    align-items: center;
    justify-content: space-between;
    padding: 0 86px 2px 6px;
    background: #f2f2f5;
    color: #74788d;
}

.help {
    position: fixed;
    right: 22px;
    bottom: 10px;
    width: 71px;
    height: 30px;
    border-radius: 15px;
    background: #f4511e;
    color: #fff;
    display: flex;
    align-items: center;
    justify-content: center;
    gap: 5px;
    font-family: 'Noto Sans', sans-serif;
    font-size: 11px;
    font-weight: 700;
}

.help svg {
    width: 14px;
    height: 14px;
    fill: none;
    stroke: #fff;
    stroke-width: 1.3;
}
```
